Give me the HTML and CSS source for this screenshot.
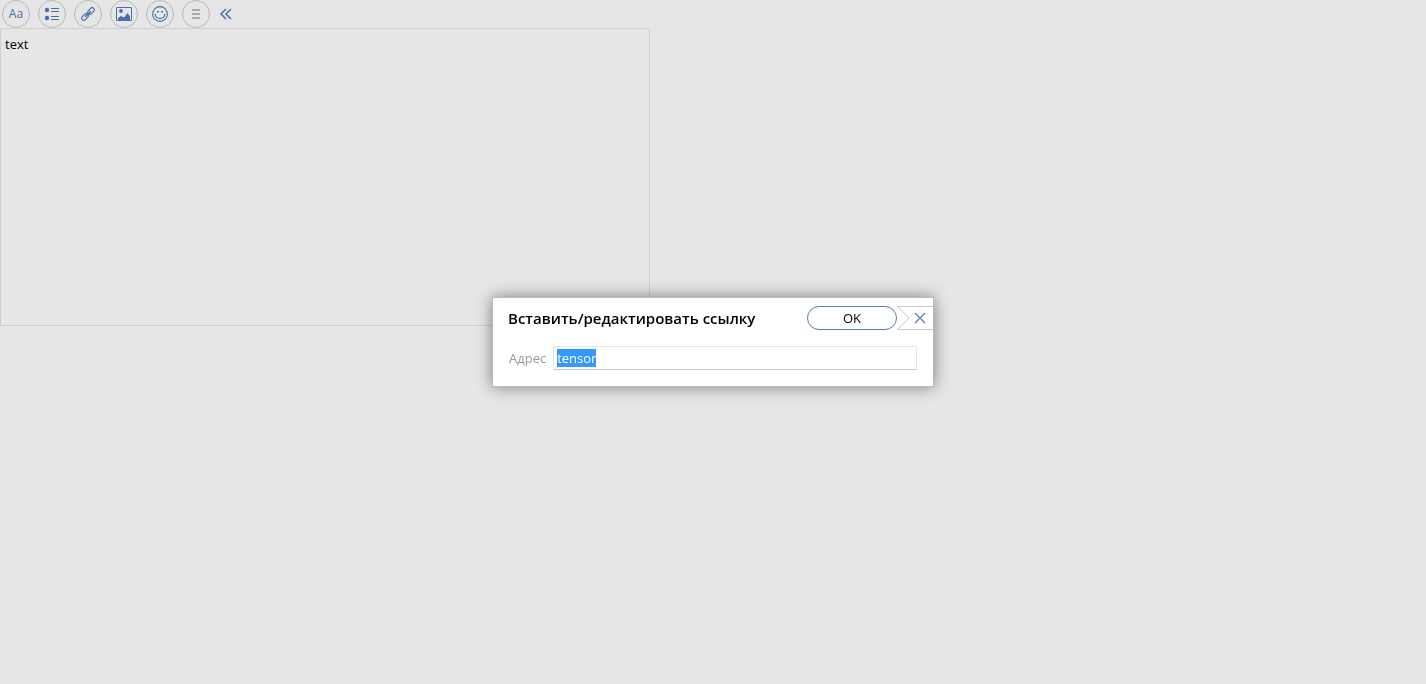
FILE: index.html
```html
<!DOCTYPE html>
<html lang="ru">
<head>
<meta charset="utf-8">
<title>Редактор</title>
<link rel="stylesheet" href="styles.css">
</head>
<body>
<main class="editor">
  <div class="toolbar" role="toolbar" aria-label="Форматирование">
    <button class="tool tool-text" type="button" aria-label="Стиль текста">Aa</button>
    <button class="tool" type="button" aria-label="Список">
      <svg class="icon" viewBox="0 0 16 16"><g fill="currentColor"><circle cx="3" cy="4" r="2.200"/><circle cx="3" cy="12" r="2.200"/><path d="M7 2h8v1H7zM7 5h8v1H7zM7 10h8v1H7zM7 13h8v1H7z"/></g></svg>
    </button>
    <button class="tool" type="button" aria-label="Ссылка">
      <svg class="icon" viewBox="0 0 16 16"><g fill="none" stroke="currentColor" stroke-width="1.2" transform="rotate(-45 8 8)"><rect x="0" y="5.900" width="7.500" height="4.200" rx="1.800"/><rect x="8.500" y="5.900" width="7.500" height="4.200" rx="1.800"/><path d="M4 8h8" stroke-width="1.5"/></g></svg>
    </button>
    <button class="tool" type="button" aria-label="Изображение">
      <svg class="icon" viewBox="0 0 16 16"><path d="M.5 1.500h15v13H.5z" fill="none" stroke="currentColor"/><circle cx="5" cy="5" r="1.900" fill="currentColor"/><path d="M2 14v-2l3-2 3 1.500 3.500-4.500 2.500 3.500V14z" fill="currentColor"/></svg>
    </button>
    <button class="tool" type="button" aria-label="Смайлик">
      <svg class="icon" viewBox="0 0 16 16"><g fill="none" stroke="currentColor" stroke-width="1.1"><circle cx="8" cy="8" r="7.4"/><path d="M3.200 8.500c.5 5.200 9.100 5.200 9.600 0M2.500 8.500h1.500M12 8.500h1.500"/></g><path d="M5 5h2v1.500H5zM9 5h2v1.500H9z" fill="currentColor"/></svg>
    </button>
    <button class="tool tool-muted" type="button" aria-label="Ещё">
      <svg class="icon" viewBox="0 0 16 16"><path d="M4 3h8v2H4zM4 7h8v2H4zM4 11h8v2H4z" fill="currentColor"/></svg>
    </button>
    <button class="collapse" type="button" aria-label="Свернуть">
      <svg class="icon" viewBox="0 0 16 16"><path d="M8 3 3 8l5 5M13 3 8 8l5 5" fill="none" stroke="currentColor" stroke-width="1.5"/></svg>
    </button>
  </div>
  <textarea class="content" aria-label="Текст">text</textarea>
</main>
<div class="overlay">
  <form class="dialog" role="dialog" aria-labelledby="dialog-title">
    <header class="dialog-head">
      <h1 class="title" id="dialog-title">Вставить/редактировать ссылку</h1>
      <button class="ok" type="button">OK</button>
      <button class="close" type="button" aria-label="Закрыть">
        <svg class="close-icon" viewBox="0 0 36 24"><path d="M36 .5H.5L12 12 .5 23.500H36" fill="none" stroke="#c8c8c8"/><path d="m18 7 10 10M28 7 18 17" fill="none" stroke="#587ab0" stroke-width="1.2"/></svg>
      </button>
    </header>
    <div class="field">
      <label class="label" for="address">Адрес</label>
      <input class="address" id="address" type="text" value="tensor">
    </div>
  </form>
</div>
<script src="script.js"></script>
</body>
</html>
```
FILE: styles.css
```css
* { box-sizing: border-box; }

body {
  margin: 0;
  min-height: 100vh;
  background: #e6e6e6;
  color: #000;
  font: 13px/18px "Open Sans", "Noto Sans", sans-serif;
}

button, input, textarea { font: inherit; }

button {
  padding: 0;
  background: none;
  border: 0;
}

.editor { max-width: 650px; }

.toolbar {
  display: flex;
  gap: 8px;
  padding-left: 2px;
}

.tool, .collapse {
  display: flex;
  align-items: center;
  justify-content: center;
  height: 28px;
  color: #4a6ea9;
}

.tool {
  width: 28px;
  border: 1px solid #b9b9b9;
  border-radius: 50%;
}

.tool-text { font-size: 12px; }

.tool-muted { color: #aaa; }

.icon {
  display: block;
  width: 16px;
  height: 16px;
}

.content {
  display: block;
  width: 100%;
  height: 298px;
  padding: 6px 4px;
  background: transparent;
  border: 1px solid #d0d0d0;
  color: #000;
  resize: none;
  outline: 0;
}

.overlay {
  position: fixed;
  inset: 0;
  display: flex;
  align-items: center;
  justify-content: center;
}

.dialog {
  width: 442px;
  max-width: 100%;
  padding: 8px 0 16px;
  background: #fff;
  border: 1px solid #bbb;
  box-shadow: 0 0 15px rgba(0, 0, 0, 0.45);
}

.dialog-head {
  display: flex;
  align-items: center;
  padding-left: 15px;
}

.title {
  flex: 1;
  margin: 0;
  font-size: 15px;
  font-weight: 600;
  line-height: 24px;
  white-space: nowrap;
}

.ok {
  width: 90px;
  height: 24px;
  border: 1px solid #587ab0;
  border-radius: 12px;
  color: #000;
  font-size: 13px;
}

.close-icon {
  display: block;
  width: 36px;
  height: 24px;
}

.field {
  display: flex;
  align-items: center;
  gap: 7px;
  padding: 16px 16px 0;
}

.label { color: #999; }

.address {
  flex: 1;
  min-width: 0;
  height: 24px;
  padding: 0 3px;
  background: #fff;
  border: 1px solid #e5e5e5;
  border-bottom-color: #c8c8c8;
  color: #000;
  outline: 0;
}

.address::selection {
  background: #39f;
  color: #fff;
}
```
FILE: script.js
```js
const address = document.getElementById("address");
address.focus();
address.select();
```
